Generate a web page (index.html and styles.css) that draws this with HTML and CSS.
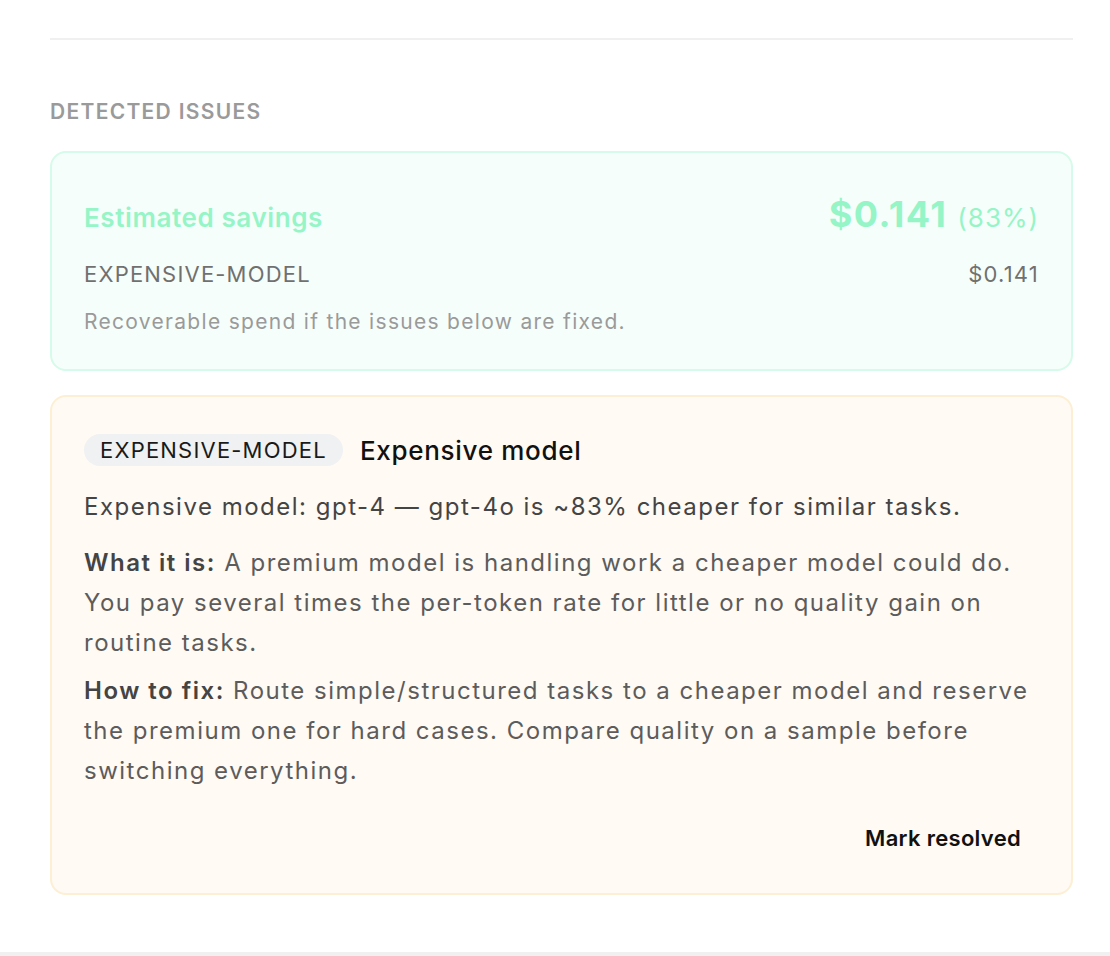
FILE: index.html
```html
<!DOCTYPE html>
<html lang="en">
  <head>
    <meta charset="UTF-8" />
    <meta name="viewport" content="width=device-width, initial-scale=1.0" />
    <title>Detected issues</title>
    <link rel="stylesheet" href="styles.css">
  </head>

  <body>
    <div class="page">
      <hr class="divider" />

      <section class="issues">
        <h3 class="section-title">Detected issues</h3>

        <!-- savings summary -->
        <div class="savings">
          <div class="savings-head">
            <span class="savings-label">Estimated savings</span>
            <span class="savings-total">$0.141 <small>(83%)</small></span>
          </div>
          <div class="savings-row">
            <span>EXPENSIVE-MODEL</span>
            <span>$0.141</span>
          </div>
          <p class="savings-note">Recoverable spend if the issues below are fixed.</p>
        </div>

        <!-- single issue card -->
        <div class="issue">
          <div class="issue-head">
            <span class="chip">EXPENSIVE-MODEL</span>
            <span class="issue-title">Expensive model</span>
          </div>
          <p class="issue-desc">Expensive model: gpt-4 — gpt-4o is ~83% cheaper for similar tasks.</p>
          <div class="issue-body">
            <p><b>What it is:</b> A premium model is handling work a cheaper model could do. You pay several times the per-token rate for little or no quality gain on routine tasks.</p>
            <p><b>How to fix:</b> Route simple/structured tasks to a cheaper model and reserve the premium one for hard cases. Compare quality on a sample before switching everything.</p>
          </div>
          <div class="issue-actions">
            <button class="resolve">Mark resolved</button>
          </div>
        </div>
      </section>
    </div>
    <div class="footer"></div>
  </body>
</html>
```

FILE: styles.css
```css
* {
  margin: 0;
  padding: 0;
  box-sizing: border-box;
}

body {
  font-family: Inter, "Noto Sans", sans-serif;
  background-color: white;
  color: #222;
}

.page {
  padding: 38px 37px 0 50px;
  min-height: 952px;
}

.divider {
  border: none;
  height: 2px;
  background-color: #f0f0f0;
}

.issues {
  padding-top: 60px;
  display: flex;
  flex-direction: column;
  gap: 24px;
}

.section-title {
  font-size: 21px;
  font-weight: 600;
  letter-spacing: 1.3px;
  text-transform: uppercase;
  color: #9a9a9a;
  line-height: 24px;
  margin-bottom: 3px;
}

.savings {
  border: 2px solid #d6fbea;
  background-color: #f6fefb;
  border-radius: 16px;
  padding: 39px 32px 35px;
  display: flex;
  flex-direction: column;
}

.savings-head {
  display: flex;
  justify-content: space-between;
  align-items: baseline;
  color: #95f5c6;
}

.savings-label {
  font-size: 26px;
  font-weight: 600;
  letter-spacing: 0.6px;
}

.savings-total {
  font-size: 36px;
  font-weight: 700;
  letter-spacing: 1.5px;
}

.savings-total small {
  font-size: 26px;
  font-weight: 400;
  letter-spacing: 1px;
}

.savings-row {
  display: flex;
  justify-content: space-between;
  font-size: 22px;
  letter-spacing: 1.2px;
  color: #707070;
  margin-top: 25px;
}

.savings-note {
  font-size: 21px;
  letter-spacing: 1.3px;
  color: #9a9a9a;
  margin-top: 22px;
}

.issue {
  border: 2px solid #fdefd3;
  background-color: #fffaf4;
  border-radius: 16px;
  padding: 37px 32px 38px;
  display: flex;
  flex-direction: column;
}

.issue-head {
  display: flex;
  align-items: center;
  gap: 17px;
}

.chip {
  background-color: #f0f1f2;
  border-radius: 16px;
  padding: 3px 16px;
  font-size: 22px;
  letter-spacing: 1.2px;
  line-height: 26px;
  color: #1a1a1a;
}

.issue-title {
  font-size: 26px;
  font-weight: 500;
  letter-spacing: 0.7px;
  color: #111;
}

.issue-desc {
  font-size: 24px;
  letter-spacing: 1.5px;
  line-height: 40px;
  color: #444;
  margin-top: 21px;
}

.issue-body {
  margin-top: 16px;
  display: flex;
  flex-direction: column;
  gap: 8px;
  font-size: 24px;
  letter-spacing: 1.5px;
  line-height: 40px;
  color: #5c5c5c;
}

.issue-body b {
  font-weight: 600;
  color: #444;
}

.issue-actions {
  display: flex;
  justify-content: flex-end;
  margin-top: 30px;
}

.resolve {
  background: none;
  border: none;
  font-family: inherit;
  font-size: 22px;
  font-weight: 600;
  letter-spacing: 0.3px;
  color: #111;
  padding: 4px 18px;
}

.footer {
  height: 4px;
  background-color: #f0f0f0;
}
```
